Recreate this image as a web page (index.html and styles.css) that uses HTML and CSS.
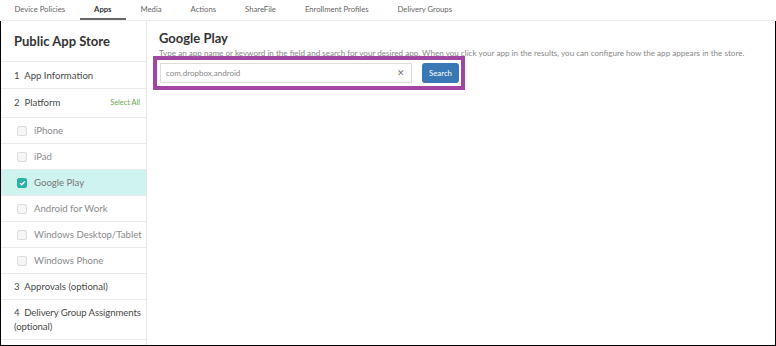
FILE: index.html
```html
<!DOCTYPE html>
<html>
<head>
    <title>Public App Store - Google Play</title>
    <link rel="stylesheet" href="styles.css">
</head>
<body>
    <div class="tabs">
        <a class="tab">Device Policies</a>
        <a class="tab active">Apps</a>
        <a class="tab">Media</a>
        <a class="tab">Actions</a>
        <a class="tab">ShareFile</a>
        <a class="tab">Enrollment Profiles</a>
        <a class="tab">Delivery Groups</a>
    </div>

    <div class="frame">
        <div class="sidebar">
            <div class="side-title">Public App Store</div>
            <div class="step first">1&nbsp; App Information</div>
            <div class="step step-head">
                <span>2&nbsp; Platform</span>
                <span class="select-all">Select All</span>
            </div>
            <div class="platform"><span class="box"></span>iPhone</div>
            <div class="platform"><span class="box"></span>iPad</div>
            <div class="platform checked">
                <span class="box">
                    <svg width="7" height="6" viewBox="0 0 7 6"><path d="M1 3.2 L2.8 4.8 L6 1.2" fill="none" stroke="#fff" stroke-width="1.4"/></svg>
                </span>Google Play
            </div>
            <div class="platform"><span class="box"></span>Android for Work</div>
            <div class="platform"><span class="box"></span>Windows Desktop/Tablet</div>
            <div class="platform"><span class="box"></span>Windows Phone</div>
            <div class="step">3&nbsp; Approvals (optional)</div>
            <div class="step tall">4&nbsp; Delivery Group Assignments<br>(optional)</div>
        </div>

        <div class="main">
            <h2>Google Play</h2>
            <p class="hint">Type an app name or keyword in the field and search for your desired app. When you click your app in the results, you can configure how the app appears in the store.</p>
            <div class="callout">
                <div class="search-field">
                    <span class="search-value">com.dropbox.android</span>
                    <span class="clear">&#x2715;</span>
                </div>
                <button class="search-btn">Search</button>
            </div>
        </div>
    </div>
</body>
</html>
```

FILE: styles.css
```css
body { margin: 0; width: 776px; height: 346px; overflow: hidden; font-family: "Lato", "Open Sans", sans-serif; color: #333; background: #fff; }

.tabs { display: flex; height: 21px; border-bottom: 1px solid #ececec; box-sizing: border-box; }
.tab { font-size: 7.7px; color: #666; line-height: 18px; padding: 0 14.5px; border-bottom: 2px solid transparent; }
.tab.active { color: #333; font-weight: bold; border-bottom-color: #666; }

.frame { display: flex; height: 325px; border: 1px solid #000; border-top: none; box-sizing: border-box; }

.sidebar { width: 145px; border-right: 1px solid #e6e6e6; flex-shrink: 0; }
.side-title { font-size: 13px; font-weight: bold; color: #333; height: 41px; line-height: 41px; padding-left: 13px; border-bottom: 1px solid #eaeaea; box-sizing: border-box; }
.step { font-size: 9.6px; color: #4a4a4a; height: 26px; line-height: 26px; padding-left: 13px; border-bottom: 1px solid #eaeaea; box-sizing: border-box; white-space: nowrap; }
.step.first { height: 27px; line-height: 27px; }
.step-head { display: flex; justify-content: space-between; padding-right: 6px; height: 29px; line-height: 28px; }
.select-all { font-size: 7.4px; color: #6aa84f; }
.step.tall { height: 40px; line-height: 14px; padding-top: 6px; letter-spacing: -0.1px; }

.platform { display: flex; align-items: center; font-size: 9.6px; color: #8a8a8a; height: 26px; padding-left: 16px; border-bottom: 1px solid #eaeaea; box-sizing: border-box; }
.platform.checked { background: #cff3ee; color: #777; }
.box { width: 8px; height: 8px; border: 1px solid #ddd; border-radius: 2px; margin-right: 7px; background: #f6f6f6; display: flex; align-items: center; justify-content: center; }
.checked .box { background: #28b3a4; border-color: #28b3a4; }

.main { flex: 1; padding: 9px 0 0 12px; }
h2 { font-size: 13px; font-weight: bold; margin: 0; color: #333; line-height: 16px; }
.hint { font-size: 8.1px; color: #888; margin: 2px 0 0; white-space: nowrap; line-height: 10px; }

.callout { display: flex; align-items: center; gap: 10px; width: 312px; height: 34px; border: 4px solid #a146a1; box-sizing: border-box; margin: -2px 0 0 -6px; padding-left: 3px; background: #fff; }
.search-field { display: flex; justify-content: space-between; align-items: center; width: 252px; height: 20px; border: 1px solid #ddd; box-sizing: border-box; padding: 0 6px 0 5px; }
.search-value { font-size: 8px; color: #888; }
.clear { font-size: 8.5px; color: #777; }
.search-btn { width: 37px; height: 20px; background: #3a78b5; color: #fff; border: none; border-radius: 3px; font-size: 7.8px; font-family: inherit; padding: 0; }
```
